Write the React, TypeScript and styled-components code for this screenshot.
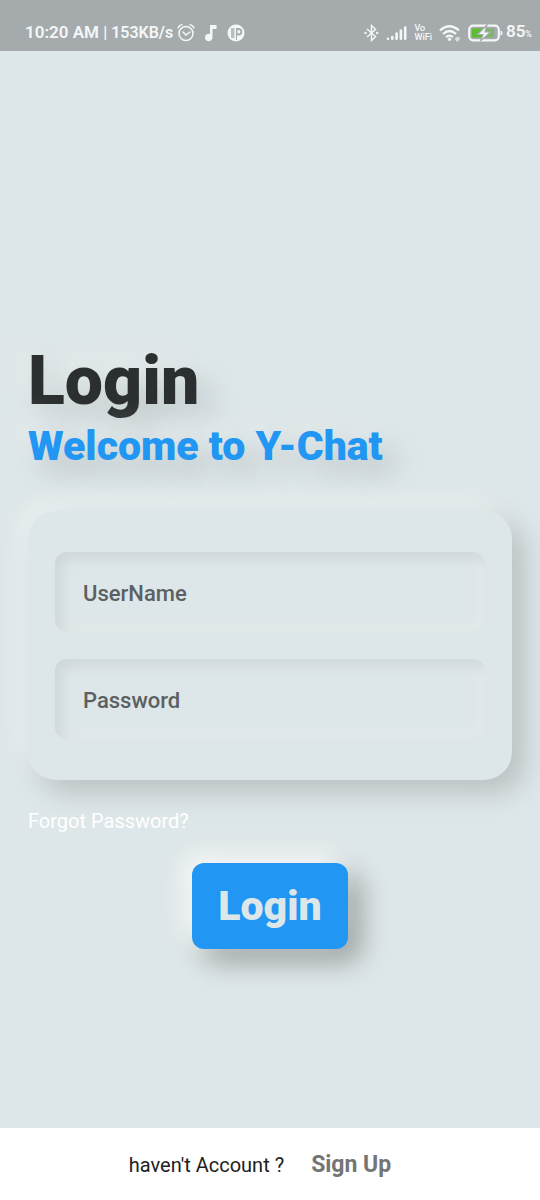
import React from "react";
import styled, { createGlobalStyle } from "styled-components";

const surface = "#dde6e8";
const accent = "#2196f3";

const GlobalStyle = createGlobalStyle`
  *, *::before, *::after { box-sizing: border-box; }
  body {
    margin: 0;
    background: ${surface};
    font-family: Roboto, "Liberation Sans", sans-serif;
  }
`;

const Screen = styled.div`
  min-height: 100vh;
  display: flex;
  flex-direction: column;
  background: ${surface};
  overflow: hidden;
`;

const StatusBar = styled.header`
  display: flex;
  align-items: center;
  justify-content: space-between;
  padding: 20px 8px 6px 25px;
  background: #a5abad;
  color: #f4f7f8;
`;

const StatusGroup = styled.div<{ $gap: number }>`
  display: flex;
  align-items: center;
  gap: ${({ $gap }) => $gap}px;
  height: 25px;
`;

const StatusText = styled.span`
  font-size: 17px;
  font-weight: 600;
  line-height: 25px;
  white-space: pre;
`;

const Speed = styled.span`
  font-size: 16px;
`;

const Percent = styled.span`
  font-size: 9px;
`;

const Carrier = styled.span`
  font-size: 9px;
  font-weight: 500;
  line-height: 9px;
`;

const Main = styled.main`
  flex: 1;
  display: flex;
  flex-direction: column;
  padding: 289px 28px 40px;
`;

const Title = styled.h1`
  margin: 0;
  font-size: 68px;
  font-weight: 900;
  line-height: 82px;
  color: #2c2f2f;
  text-shadow: -14px -14px 28px rgba(255, 255, 255, 0.3), 14px 14px 28px rgba(0, 0, 0, 0.15);
`;

const Subtitle = styled.p`
  margin: 0 0 40px;
  font-size: 41px;
  font-weight: 900;
  line-height: 49px;
  color: ${accent};
  text-shadow: -14px -14px 28px rgba(255, 255, 255, 0.3), 14px 14px 28px rgba(0, 0, 0, 0.17);
`;

const Form = styled.form`
  display: flex;
  flex-direction: column;
`;

const Card = styled.div`
  display: flex;
  flex-direction: column;
  gap: 27px;
  padding: 41px 27px;
  border-radius: 28px;
  background: ${surface};
  box-shadow: -11px -11px 22px rgba(255, 255, 255, 0.35), 12px 12px 28px rgba(0, 0, 0, 0.17);
`;

const Field = styled.input`
  width: 100%;
  height: 80px;
  padding: 2px 28px 0;
  border: 0;
  outline: 0;
  border-radius: 12px;
  background: ${surface};
  box-shadow: inset 6px 6px 14px rgba(0, 0, 0, 0.07), inset -7px -7px 10px rgba(255, 255, 255, 0.16);
  color: #2c2f2f;
  font-family: inherit;
  font-size: 22px;
  font-weight: 500;
  &::placeholder {
    color: #5b6062;
    opacity: 1;
  }
`;

const ForgotLink = styled.a`
  align-self: flex-start;
  margin: 28px 0;
  font-size: 20px;
  line-height: 27px;
  color: #fff;
  text-decoration: none;
`;

const LoginButton = styled.button`
  align-self: center;
  padding: 19px 26px 18px;
  border: 0;
  border-radius: 12px;
  background: ${accent};
  box-shadow: -8px -8px 24px rgba(255, 255, 255, 0.85), 12px 12px 28px rgba(0, 0, 0, 0.33);
  color: ${surface};
  font-family: inherit;
  font-size: 41px;
  font-weight: 900;
  line-height: 49px;
  cursor: pointer;
`;

const Footer = styled.footer`
  display: flex;
  align-items: center;
  justify-content: center;
  gap: 27px;
  padding: 23px 42px 21px 22px;
  background: #fff;
  color: #212121;
  font-size: 20px;
  line-height: 28px;
`;

const SignUpLink = styled.a`
  color: #757575;
  font-size: 23px;
  font-weight: 700;
  text-decoration: none;
`;

const AlarmIcon = () => (
  <svg width="18" height="20" viewBox="0 0 18 20" fill="none" stroke="currentColor" strokeWidth="1.5" strokeLinecap="round">
    <circle cx="9" cy="10.5" r="7" />
    <path d="M1 4.800Q2.200 2.400 4.800 1.600M17 4.800Q15.800 2.400 13.200 1.600M6 9l3 3 4-3" />
  </svg>
);

const NoteIcon = () => (
  <svg width="12" height="18" viewBox="0 0 12 18" fill="currentColor">
    <path d="M5 1h6.500v4H7.500v8.500A3.800 3.800 0 1 1 5 10Z" />
  </svg>
);

const AppIcon = () => (
  <svg width="18" height="18" viewBox="0 0 18 18">
    <circle cx="9" cy="9" r="8.500" fill="currentColor" />
    <path d="M4 4h3.500v10H4Z" fill="#b9bfc1" />
    <path d="M9 4h2.500a3.500 3.500 0 0 1 0 7.500H10V16H9Z" fill="#a5abad" />
    <path d="M10.500 6h1.200a1.700 1.700 0 0 1 0 3.500h-1.200Z" fill="currentColor" />
  </svg>
);

const BluetoothIcon = () => (
  <svg width="15" height="18" viewBox="0 0 15 18" fill="none" stroke="currentColor" strokeWidth="1.400">
    <path d="M3 5l8.500 7.500-4 4V1.500l4 4L3 13" />
    <circle cx="1.500" cy="9" r="1.200" fill="currentColor" stroke="none" />
    <circle cx="13.200" cy="9" r="1.200" fill="currentColor" stroke="none" />
  </svg>
);

const SignalIcon = () => (
  <svg width="21" height="16" viewBox="0 0 21 16" stroke="currentColor" strokeWidth="2.600" strokeLinecap="round">
    <path d="M2 13.800v0M6.300 13.800v-1.800M10.600 13.800V8.500M14.900 13.800V5.500M19.200 13.800V2.500" />
  </svg>
);

const WifiIcon = () => (
  <svg width="22" height="18" viewBox="0 0 22 18" fill="none" stroke="currentColor" strokeWidth="2.300">
    <path d="M1 6.500Q10.500 -2 20 6.500M4 10Q10.500 4 17 10M7 13.200Q10.500 10 14 13.200" />
    <circle cx="10.500" cy="15.300" r="1.700" fill="currentColor" stroke="none" />
    <path d="M16.800 15.200h3.600a1.800 1.800 0 1 0-.7 1.500" strokeWidth="1" />
  </svg>
);

const BatteryIcon = () => (
  <svg width="35" height="18" viewBox="0 0 35 18">
    <rect x="1.200" y="1.700" width="29.600" height="14.600" rx="4" fill="none" stroke="currentColor" strokeWidth="2.200" />
    <path d="M4 4.500h13v9H4Z" fill="#5cbd2e" />
    <path d="M17 4.500h9v9h-9Z" fill="#7fb56a" />
    <path d="M32.500 6.500q2 0 2 2.500t-2 2.500Z" fill="currentColor" />
    <path d="M19 1L9.500 10.500h5.500L12.500 17 22.500 8H17Z" fill="currentColor" stroke="#a5abad" strokeWidth="1.200" />
  </svg>
);

export default function App() {
  return (
    <>
      <GlobalStyle />
      <Screen>
        <StatusBar>
          <StatusGroup $gap={10}>
            <StatusGroup $gap={4}>
              <StatusText>
                10:20 AM <Speed>| 153KB/s</Speed>
              </StatusText>
              <AlarmIcon />
            </StatusGroup>
            <NoteIcon />
            <AppIcon />
          </StatusGroup>
          <StatusGroup $gap={7}>
            <BluetoothIcon />
            <SignalIcon />
            <Carrier>
              Vo
              <br />
              WiFi
            </Carrier>
            <WifiIcon />
            <StatusGroup $gap={3}>
              <BatteryIcon />
              <StatusText>
                85<Percent>%</Percent>
              </StatusText>
            </StatusGroup>
          </StatusGroup>
        </StatusBar>
        <Main>
          <Title>Login</Title>
          <Subtitle>Welcome to Y-Chat</Subtitle>
          <Form onSubmit={(event) => event.preventDefault()}>
            <Card>
              <Field type="text" aria-label="UserName" placeholder="UserName" />
              <Field type="password" aria-label="Password" placeholder="Password" />
            </Card>
            <ForgotLink href="#forgot">Forgot Password?</ForgotLink>
            <LoginButton type="submit">Login</LoginButton>
          </Form>
        </Main>
        <Footer>
          <span>haven't Account ?</span>
          <SignUpLink href="#signup">Sign Up</SignUpLink>
        </Footer>
      </Screen>
    </>
  );
}
